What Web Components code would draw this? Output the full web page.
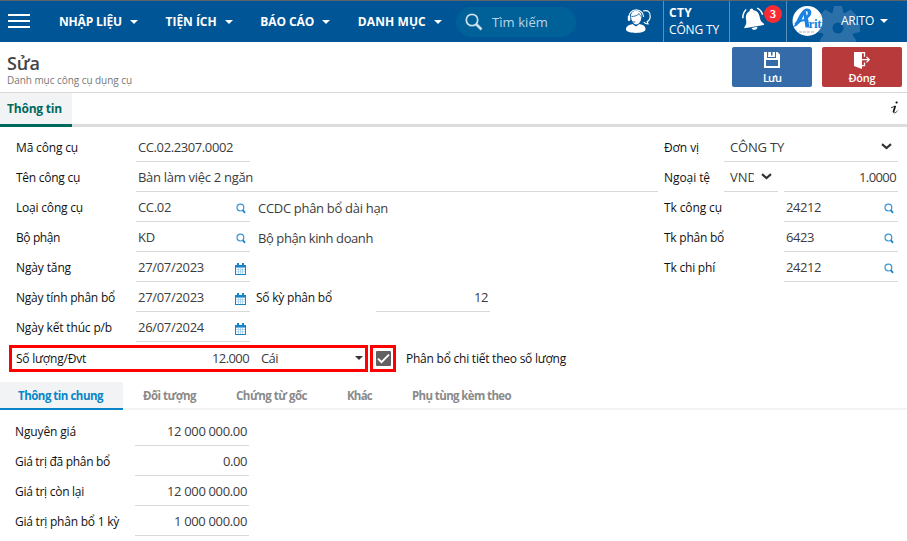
<!DOCTYPE html>
<html lang="vi">
<head>
<meta charset="utf-8">
<title>Danh mục công cụ dụng cụ</title>
<style>
html,body{margin:0;height:100%;overflow:hidden;background:#fff}
body{font-family:"Open Sans","Noto Sans",sans-serif;font-size:13px;color:#333}
</style>
</head>
<body>
<asset-page></asset-page>
<script>
const define=(name,html,init)=>customElements.define(name,class extends HTMLElement{
  connectedCallback(){
    if(this.shadowRoot)return;
    const root=this.attachShadow({mode:'open'});
    root.innerHTML=typeof html==='function'?html(this):html;
    if(init)init(this,root);
  }
});

/* One line of text, tracked to occupy the width given in "w". */
define('fit-text','<style>:host{display:inline-block;white-space:pre;flex:none}span{display:inline-block}</style><span><slot></slot></span>',(el,root)=>{
  const w=+el.getAttribute('w');
  if(!w)return;
  const s=root.querySelector('span');
  const n=el.textContent.length;
  const natural=s.getBoundingClientRect().width;
  s.style.letterSpacing=((w-natural)/n).toFixed(4)+'px';
  el.style.width=w+'px';
});

const icons={
  search:'<svg width="10" height="11" viewBox="0 0 10 11"><circle cx="4.4" cy="4.6" r="3.4" fill="none" stroke="#3a97d4" stroke-width="1.2"/><path d="M6.8 7.2 9 9.8" stroke="#1a86cc" stroke-width="1.8"/></svg>',
  date:'<svg width="11" height="12" viewBox="0 0 11 12"><path fill="#1a82c6" d="M0 2h2V0h2v2h3V0h2v2h2v10H0z"/><path fill="#fff" d="M1 4.6h9V11H1z"/><path d="M3.5 4.6V11M5.5 4.6V11M7.5 4.6V11M1 6.6h9M1 8.8h9" stroke="#9bcbea" stroke-width=".7"/></svg>',
  chev:'<svg width="11" height="7" viewBox="0 0 11 7"><path d="M1 1.2 5.5 5 10 1.2" fill="none" stroke="#333" stroke-width="2.2"/></svg>',
  drop:'<svg width="8" height="4" viewBox="0 0 8 4"><path d="M0 0h8L4 4z" fill="#333"/></svg>'
};

/* Underlined input: value, optional trailing icon. */
define('form-field',el=>`<style>
:host{display:flex;box-sizing:border-box;height:30px;border-bottom:1px solid #d9d9d9;padding:1px 2px 0 2px;align-items:center;font-size:13px;color:#3c3c3c}
:host([right]){justify-content:flex-end}
:host([plain]){border-color:transparent}
i{margin-left:auto;display:flex;padding:3px 2px 0 0}
:host([icon=chev]) i{padding:0 0 1px}
:host([icon=drop]) i{padding:0}
</style><slot></slot>${el.getAttribute('icon')?`<i>${icons[el.getAttribute('icon')]}</i>`:''}`);

define('field-label','<style>:host{display:flex;align-items:center;height:30px;box-sizing:border-box;padding-top:1px;font-size:12px;color:#111}</style><slot></slot>');

define('nav-item',`<style>:host{display:flex;align-items:center;gap:8px;font-weight:700;font-size:12px;color:#fff}svg{flex:none}</style><slot></slot><svg width="8" height="4" viewBox="0 0 8 4"><path d="M0 0h8L4 4z" fill="#fff"/></svg>`);

define('app-header',`<style>
:host{display:flex;height:42px;box-sizing:border-box;border-top:1px solid #5f6468;background:#005596;color:#fff;align-items:stretch;overflow:hidden}
svg{display:block;flex:none}
.menu{padding:13px 0 0 8px;width:51px;box-sizing:content-box}
nav{display:flex;gap:27.6px}
.pill{margin:6px 0 5px 14.2px;width:120px;box-sizing:border-box;padding-left:9px;border-radius:15px;background:#006199;display:flex;align-items:center;gap:9px;color:#b9d5e6;font-size:13px}
.agent{margin-left:auto;width:37px;padding-top:8px}
.org{width:67px;box-sizing:border-box;border-left:1px solid #5a8fba;border-right:1px solid #5a8fba;padding:4px 0 0 5px;font-size:12px;line-height:17px}
.org b{display:block;line-height:16px}
.bell{width:57px;position:relative;border-right:1px solid #5a8fba;box-sizing:border-box;padding:5px 0 0 11px}
.badge{position:absolute;left:34px;top:4px;width:18px;height:18px;border-radius:50%;background:#f92d31;font:bold 12px/18px "Liberation Serif",serif;text-align:center}
.user{position:relative;width:120px;display:flex}
.logo{padding:4px 0 0 4px;position:relative;z-index:1}
.gear{position:absolute;left:28px;top:4px}
.name{position:absolute;left:54px;top:11px;display:flex;align-items:center;gap:6px;font-size:12px}
</style>
<div class="menu"><svg width="22" height="14"><path d="M0 1h22M0 7h22M0 13h22" stroke="#fff" stroke-width="2"/></svg></div>
<nav><nav-item><fit-text w="63">NHẬP LIỆU</fit-text></nav-item><nav-item><fit-text w="51">TIỆN ÍCH</fit-text></nav-item><nav-item><fit-text w="54">BÁO CÁO</fit-text></nav-item><nav-item><fit-text w="68">DANH MỤC</fit-text></nav-item></nav>
<div class="pill"><svg width="18" height="18" viewBox="0 0 18 18"><circle cx="7" cy="7" r="5.7" fill="none" stroke="#c9dfec" stroke-width="1.7"/><path d="m11 11 5.5 5.5" stroke="#c9dfec" stroke-width="2.6"/></svg><fit-text w="56">Tìm kiếm</fit-text></div>
<div class="agent"><svg width="26" height="25" viewBox="0 0 26 25"><path fill="#fff" d="M0 20.500c0-3.500 3-4.500 6.500-5.500l3.500 2.500 3.500-2.500c4 1 6 2 6 5.500 0 4.500-19.500 4.500-19.500 0z"/><path fill="#fff" d="M5 7c0-7 10.500-7 10.500 0 0 4-2 8.500-5.200 8.500S5 11 5 7z"/><path d="M3 8C3 5 5 .8 10.300.8S17.500 5 17.500 8" fill="none" stroke="#fff" stroke-width="1.200"/><rect x="1.800" y="6.500" width="2.500" height="5.500" rx="1.200" fill="#fff"/><path d="M17 2c5-1.500 7.500 1.500 7.200 5.200 0 3-1.200 4.500-3 5.300l.8 2.500c-2 0-3.500-1-4.200-2" fill="none" stroke="#fff" stroke-width="1.200"/><path d="M5.500 7.500c3 0 6-1 7.500-3 .5 1.500 1.300 2.500 2.500 3M4 11c1 1.500 3 2 5.500 2" fill="none" stroke="#005596" stroke-width=".8"/></svg></div>
<div class="org"><b><fit-text w="23">CTY</fit-text></b><fit-text w="50">CÔNG TY</fit-text></div>
<div class="bell"><svg width="25" height="26" viewBox="0 0 25 26"><g transform="rotate(-10 12 13)"><path fill="#fff" d="M12 2.500a1.800 1.800 0 0 1 1.800 2C18 5.500 19 9 19 13c0 3.500 1 4.500 3 6.500v1.200H2v-1.200c2-2 3-3 3-6.500 0-4 1-7.500 5.200-8.500a1.800 1.800 0 0 1 1.800-2zM9 21.500h6c-.5 3.200-5.500 3.200-6 0z"/><path d="M2.200 10.500C2.500 7 4 4.500 7 2.500M18 3c2.500 1.800 4 4.500 4.200 7.500" fill="none" stroke="#fff" stroke-width="1.500"/></g></svg><span class="badge">3</span></div>
<div class="user"><div class="gear"><svg width="46" height="46" viewBox="-23 -23 46 46"><g fill="#2b70a8"><circle r="16"/><g id="t"><path d="M-4-22h8l2 9H-6zM-4 22h8l2-9H-6z"/></g><use href="#t" transform="rotate(45)"/><use href="#t" transform="rotate(90)"/><use href="#t" transform="rotate(135)"/></g><circle r="5.500" fill="#005596"/></svg></div>
<div class="logo"><svg width="32" height="32" viewBox="0 0 32 32"><circle cx="16.500" cy="16" r="15" fill="#fff"/><path fill="#1982e2" d="M2 22C6 18 8 6 15 3.500c5-.5 6 3 5 6-1 2-2 3-3 3.500l1.500 9.500h-4L12.500 10C11 15 8 21 2 22z"/><path fill="#fff" d="m14.800 6 .8 4.500c1.500-1 2-4-.8-4.500z"/><path d="M4 19c4-3 7-4 11-4" stroke="#1982e2" stroke-width="2" fill="none"/><path d="M8 27h16" stroke="#d5d5d5" stroke-width="2" stroke-dasharray="3 1"/><text x="17.500" y="22.500" font-family="Liberation Serif" font-weight="bold" font-size="13" textLength="13" fill="#1982e2">rit</text></svg></div>
<div class="name"><fit-text w="33">ARITO</fit-text><svg width="8" height="4" viewBox="0 0 8 4"><path d="M0 0h8L4 4z" fill="#fff"/></svg></div></div>`);

define('action-button',`<style>:host{display:flex;flex-direction:column;align-items:center;width:80px;height:40px;border-radius:2px;color:#fff;font-weight:600;font-size:11px;box-sizing:border-box;padding-top:5px;line-height:15px;gap:1px}:host([kind=save]){background:#356ba8}:host([kind=close]){background:#b93a3a}</style><slot name="icon"></slot><slot></slot>`);

define('page-title',`<style>
:host{display:flex;height:51px;box-sizing:border-box;border-bottom:1px solid #d9d9d9;padding:5px 5px 0 7px;justify-content:space-between}
h1{margin:6px 0 0;font-size:18px;line-height:20px;font-weight:600;color:#444}
p{margin:0;font-size:10px;line-height:14px;color:#777}
.actions{display:flex;gap:10px}
svg{display:block}
</style><div><h1><fit-text w="33">Sửa</fit-text></h1><p><fit-text w="125">Danh mục công cụ dụng cụ</fit-text></p></div>
<div class="actions"><action-button kind="save"><svg slot="icon" width="16" height="17" viewBox="0 0 16 17"><path fill="#fff" d="M0 0h3v6h9V0h1.500L16 2.500V16H0zM4.200 0H7v3.500H4.200zM8.500 0H11v3.500H8.500zM4 3.500h7V5H4z"/><path fill="#356ba8" d="M2 8h12v6H2z"/></svg><fit-text w="18">Lưu</fit-text></action-button>
<action-button kind="close"><svg slot="icon" width="16" height="17" viewBox="0 0 16 17"><path fill="#fff" d="M0 0h8v17L0 14z"/><path d="M3 .7h7.500v4M10.500 10.500v3.200H8M8 7.700h7M12.500 5l2.700 2.700-2.700 2.700" fill="none" stroke="#fff" stroke-width="1.300"/></svg><fit-text w="27">Đóng</fit-text></action-button></div>`);

define('main-tabs',`<style>:host{display:flex;height:34px;box-sizing:border-box;border-bottom:3px solid #dcdcdc;justify-content:space-between}
.on{height:34px;box-sizing:border-box;width:72px;padding:0 0 0 7px;background:#f2f3f4;border-bottom:3px solid #00695c;color:#00695c;font-weight:700;font-size:12px;display:flex;align-items:center}
svg{margin:8px 6px 0 0}</style><div class="on"><fit-text w="55">Thông tin</fit-text></div><svg width="12" height="14" viewBox="0 0 12 14"><circle cx="7.600" cy="1.500" r="1.100"/><path d="M2 6.800 6.300 5" fill="none" stroke="#222" stroke-width=".9"/><path d="M6.300 5 4.400 11" fill="none" stroke="#111" stroke-width="1.700"/><path d="M4.300 10.600c-.3 2 2 1.800 4.200-.8" fill="none" stroke="#222" stroke-width=".9"/></svg>`);

define('sub-tabs',`<style>:host{display:flex;height:28px;box-sizing:border-box;border-bottom:2px solid #f2f3f4;font-weight:700;font-size:11.500px;color:#8a8a8a}
div{display:flex;align-items:center;padding-left:20px;height:28px;box-sizing:border-box}
.on{width:123px;padding-left:18px;background:#f2f3f4;border-bottom:2px solid #0a85c9;color:#0a85c9}div+div{padding-left:40px;padding-bottom:2px}.on+div{padding-left:20px}</style>
<div class="on"><fit-text w="85">Thông tin chung</fit-text></div><div><fit-text w="53">Đối tượng</fit-text></div><div><fit-text w="71">Chứng từ gốc</fit-text></div><div><fit-text w="25">Khác</fit-text></div><div><fit-text w="99">Phụ tùng kèm theo</fit-text></div>`);

define('form-row','<style>:host{display:grid;height:30px;align-items:center}</style><slot></slot>');
define('highlight-box','<style>:host{display:grid;box-sizing:border-box;height:27px;border:3px solid #f00;align-items:center}</style><slot></slot>');
define('check-box','<style>:host{display:block;width:15px;height:15px;background:#616161;border-radius:1px;margin-bottom:1px}svg{display:block}</style><svg width="15" height="15" viewBox="0 0 15 15"><path d="m2 7.600 3.500 3.500L13 3.600" fill="none" stroke="#fff" stroke-width="2"/></svg>');

define('asset-page',()=>{
  const L=(t,w)=>`<field-label><fit-text w="${w}">${t}</fit-text></field-label>`;
  const F=(t,w,a='')=>`<form-field ${a}><fit-text w="${w}">${t}</fit-text></form-field>`;
  const X=(t,w)=>`<form-field plain style="padding-top:2px"><fit-text w="${w}">${t}</fit-text></form-field>`;
  return `<style>
:host{display:block;width:907px;height:541px;overflow:hidden;background:#fff}
.form{display:grid;grid-template-columns:642px 234px;column-gap:6px;padding:5px 0 0 16px;height:214px;box-sizing:border-box}
.a{grid-template-columns:120px 114px 1fr}
.b{grid-template-columns:120px 522px}
.c{grid-template-columns:120px 114px 6px 1fr}
.d{grid-template-columns:120px 114px 6px 120px 114px}
.e{grid-template-columns:60px 174px}
.f{grid-template-columns:60px 54px 6px 114px}
.g{grid-template-columns:120px 114px}
.r{display:block}
.qty{display:flex;height:41px;padding:4px 0 0 9px;box-sizing:border-box}
.q{width:359px;grid-template-columns:124px 111px 8px 1fr;padding:0 0 0 4px}
.q form-field,.q field-label{height:21px;padding-top:0;padding-bottom:1px}
.q form-field{border-bottom:0}
.ck{width:26px;margin:0 10px 0 2px;padding-left:3px}
.qty>field-label{height:27px;padding:0 0 1px}
.sum{padding:6px 0 0 15px}
.clip{overflow:hidden;width:24px;white-space:nowrap}
</style>
<app-header></app-header><page-title></page-title><main-tabs></main-tabs>
<div class="form"><div class="l">
<form-row class="a">${L('Mã công cụ',62)}${F('CC.02.2307.0002',95)}</form-row>
<form-row class="b">${L('Tên công cụ',64)}${F('Bàn làm việc 2 ngăn',115)}</form-row>
<form-row class="c">${L('Loại công cụ',67)}${F('CC.02',33,'icon="search"')}<span></span>${X('CCDC phân bổ dài hạn',130)}</form-row>
<form-row class="c">${L('Bộ phận',44)}${F('KD',17,'icon="search"')}<span></span>${X('Bộ phận kinh doanh',115)}</form-row>
<form-row class="a">${L('Ngày tăng',55)}${F('27/07/2023',66,'icon="date"')}</form-row>
<form-row class="d">${L('Ngày tính phân bổ',99)}${F('27/07/2023',66,'icon="date"')}<span></span>${L('Số kỳ phân bổ',76)}${F('12',14,'right')}</form-row>
<form-row class="a">${L('Ngày kết thúc p/b',96)}${F('26/07/2024',66,'icon="date"')}</form-row>
</div><div class="r">
<form-row class="e">${L('Đơn vị',35)}<form-field icon="chev" style="padding-left:6px;padding-right:6px"><fit-text w="54">CÔNG TY</fit-text></form-field></form-row>
<form-row class="f">${L('Ngoại tệ',46)}<form-field icon="chev" style="padding-left:6px;padding-right:6px"><span class="clip"><fit-text w="27">VND</fit-text></span></form-field><span></span>${F('1.0000',37,'right')}</form-row>
<form-row class="g">${L('Tk công cụ',58)}${F('24212',35,'icon="search"')}</form-row>
<form-row class="g">${L('Tk phân bổ',60)}${F('6423',28,'icon="search"')}</form-row>
<form-row class="g">${L('Tk chi phí',51)}${F('24212',35,'icon="search"')}</form-row>
</div></div>
<div class="qty"><highlight-box class="q">${L('Số lượng/Đvt',70)}${F('12.000',37,'right plain')}<span></span>${F('Cái',17,'icon="drop" plain')}</highlight-box>
<highlight-box class="ck"><check-box></check-box></highlight-box>${L('Phân bổ chi tiết theo số lượng',160)}</div>
<sub-tabs></sub-tabs>
<div class="sum">
<form-row class="g">${L('Nguyên giá',61)}${F('12 000 000.00',80,'right')}</form-row>
<form-row class="g">${L('Giá trị đã phân bổ',95)}${F('0.00',24,'right')}</form-row>
<form-row class="g">${L('Giá trị còn lại',69)}${F('12 000 000.00',80,'right')}</form-row>
<form-row class="g">${L('Giá trị phân bổ 1 kỳ',104)}${F('1 000 000.00',73,'right')}</form-row>
</div>`;});
</script>
</body>
</html>
